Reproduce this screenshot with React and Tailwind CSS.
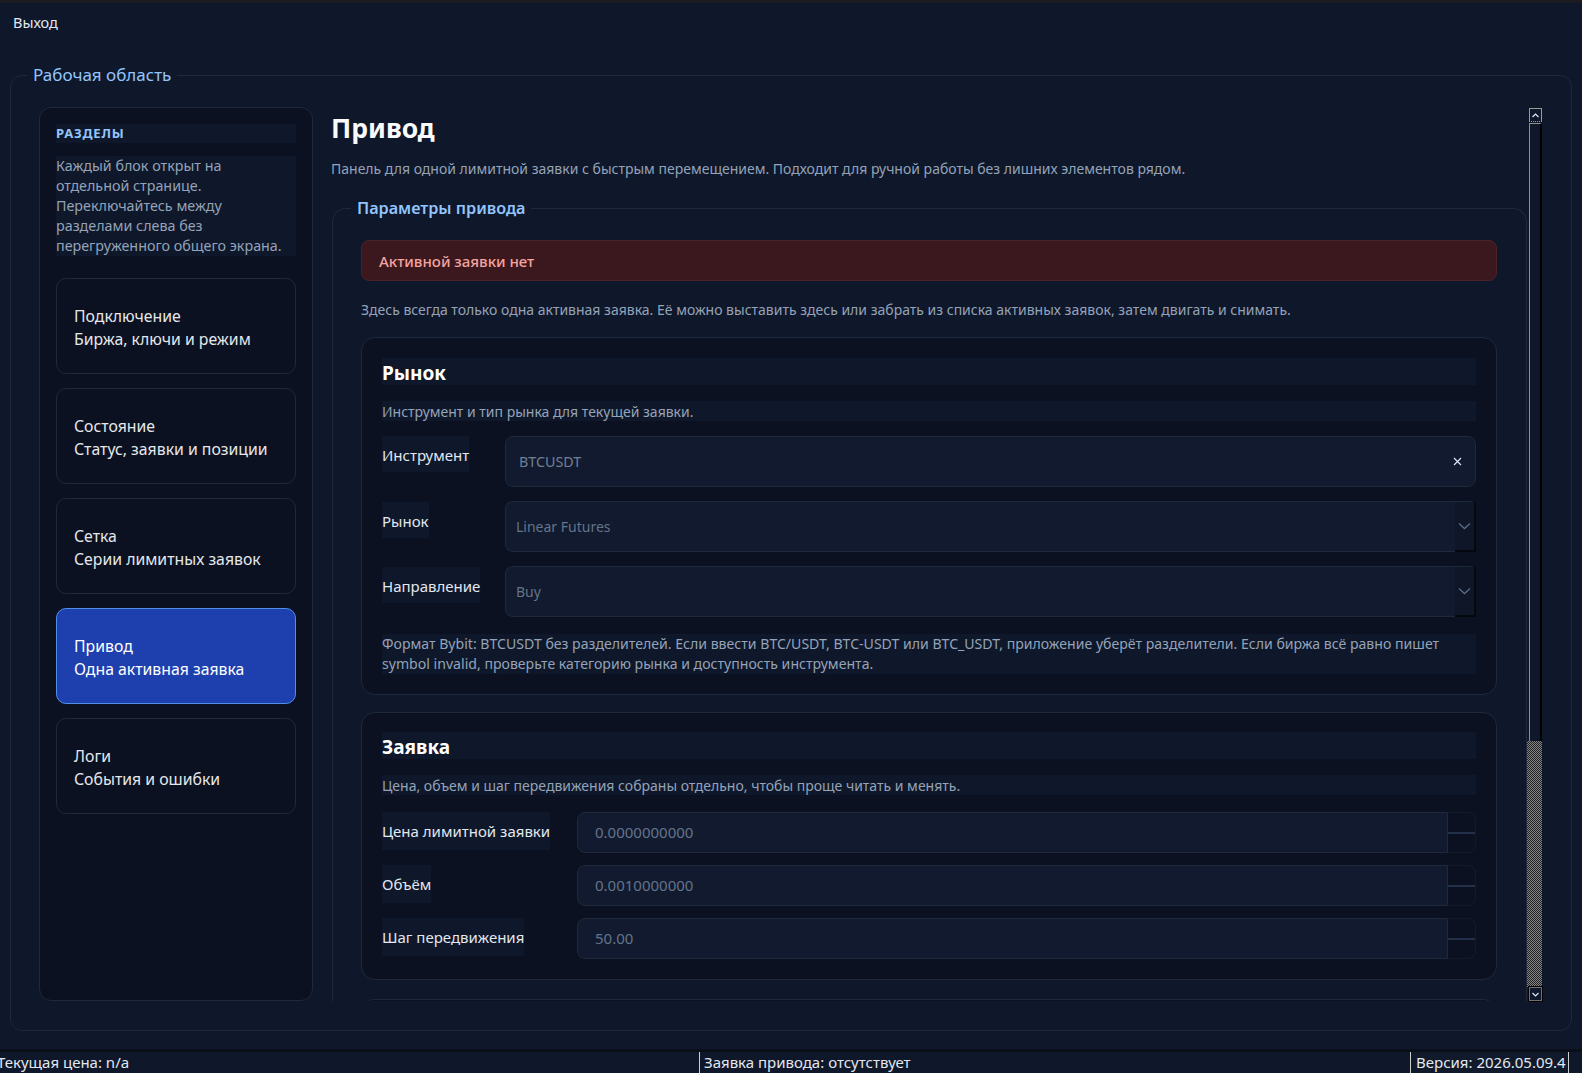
import React from "react";

const navItems = [
  { title: "Подключение", sub: "Биржа, ключи и режим" },
  { title: "Состояние", sub: "Статус, заявки и позиции" },
  { title: "Сетка", sub: "Серии лимитных заявок" },
  { title: "Привод", sub: "Одна активная заявка", active: true },
  { title: "Логи", sub: "События и ошибки" },
];

function Chevron() {
  return (
    <svg width="13" height="8" viewBox="0 0 13 8" fill="none">
      <path d="M1 1.5L6.5 6.5L12 1.5" stroke="#5b6b84" strokeWidth="1.3" />
    </svg>
  );
}

function Label({ children }) {
  return (
    <div className="inline-flex h-[36px] items-center pt-[3px] bg-[#0f172a] text-[15px] text-[#e2e8f0] whitespace-nowrap">
      {children}
    </div>
  );
}

function SelectBox({ value }) {
  return (
    <div className="flex-1 h-[51px] flex rounded-l-[8px] rounded-tr-[6px] border-y border-l border-[#1e293b] bg-[#111a2e]">
      <div className="flex-1 flex items-center pl-[10px] text-[14px] text-[#64748b]">{value}</div>
      <div className="w-[21px] -mb-[1px] flex items-center justify-center bg-[#0e1628] border-r-2 border-b-2 border-r-[#05080f] border-b-[#05080f]">
        <Chevron />
      </div>
    </div>
  );
}

function NumberBox({ value }) {
  return (
    <div className="flex-1 h-[41px] flex">
      <div className="flex-1 flex items-center pl-[17px] bg-[#111a2e] border border-[#1e293b] rounded-l-[8px] text-[15px] text-[#64748b]">
        {value}
      </div>
      <div className="w-[28px] flex items-center border-y border-r border-[#121b2c] rounded-r-[8px]">
        <div className="w-full h-[2px] bg-[#22304a]" />
      </div>
    </div>
  );
}

function SectionCard({ title, desc, children, className = "" }) {
  return (
    <div className={"rounded-[14px] border border-[#1e293b] bg-[#0b1120] px-[20px] " + className}>
      <div className="bg-[#0f172a] h-[27px] pt-[3px] flex items-center text-[19px] font-bold text-white">{title}</div>
      <div className="mt-[16px] bg-[#0f172a] h-[20px] flex items-center text-[14px] text-[#94a3b8]">{desc}</div>
      {children}
    </div>
  );
}

function ScrollBar() {
  return (
    <div className="w-[13px] mt-[1px] flex flex-col">
      <div className="h-[13px] border-t border-x border-[#9a9a9a] flex items-center justify-center">
        <svg width="7" height="5" viewBox="0 0 7 5" fill="none">
          <path d="M0.5 4L3.5 1L6.5 4" stroke="#dbeafe" strokeWidth="1.2" />
        </svg>
      </div>
      <div className="h-[1px] border-t border-dotted border-[#9a9a9a]" />
      <div className="h-[618px] mt-[1px] border-t border-l border-[#8f8f8f] border-r-2 border-r-black bg-[#0f172a]" />
      <div className="flex-1 -ml-[2px] w-[15px] bg-[repeating-conic-gradient(#858585_0_25%,#222222_0_50%)] bg-[length:2px_2px]" />
      <div className="h-[14px] border border-[#6f6f6f] outline outline-1 outline-black bg-[#0f172a] flex items-center justify-center">
        <svg width="7" height="5" viewBox="0 0 7 5" fill="none">
          <path d="M0.5 1L3.5 4L6.5 1" stroke="#dbeafe" strokeWidth="1.2" />
        </svg>
      </div>
    </div>
  );
}

export default function App() {
  return (
    <div className="w-[1582px] h-[1073px] bg-[#0f172a] flex flex-col overflow-hidden font-['Noto_Sans',sans-serif] text-[#e2e8f0]">
      <div className="h-[3px] bg-[#1c1b22]" />
      <div className="h-[40px] px-[13px] flex items-center text-[14.5px] text-[#e2e8f0]">Выход</div>

      {/* Workspace group box */}
      <div className="relative mx-[10px] mt-[32px] h-[956px] border border-[#1e293b] rounded-[12px]">
        <span className="absolute left-[16px] -top-[13px] px-[6px] bg-[#0f172a] text-[17px] leading-[24px] text-[#93c5fd]">
          Рабочая область
        </span>
        <div className="flex h-full pt-[31px] pb-[29px] pl-[28px] pr-[29px]">
          {/* Sidebar */}
          <aside className="w-[274px] shrink-0 rounded-[12px] border border-[#1e293b] bg-[#0b1120] px-[16px] pt-[16px]">
            <div className="h-[19px] bg-[#0f172a] flex items-center text-[13px] font-bold tracking-[0.06em] text-[#93c5fd]">
              РАЗДЕЛЫ
            </div>
            <div className="mt-[13px] bg-[#0f172a] text-[14.3px] leading-[20px] text-[#94a3b8]">
              Каждый блок открыт на
              <br />
              отдельной странице.
              <br />
              Переключайтесь между
              <br />
              разделами слева без
              <br />
              перегруженного общего экрана.
            </div>
            <nav className="mt-[22px] flex flex-col gap-[14px]">
              {navItems.map((it) => (
                <div
                  key={it.title}
                  className={
                    "h-[96px] rounded-[10px] border px-[17px] pt-[4px] flex flex-col justify-center text-[15.8px] leading-[23px] " +
                    (it.active
                      ? "bg-[#1e40af] border-[#4f8fe8] text-white"
                      : "bg-[#0b1120] border-[#1e293b] text-[#e5e7eb]")
                  }
                >
                  <span>{it.title}</span>
                  <span>{it.sub}</span>
                </div>
              ))}
            </nav>
          </aside>

          {/* Page content */}
          <main className="flex-1 ml-[18px] flex gap-[2px] min-w-0">
            <div className="flex-1 min-w-0 overflow-hidden pt-[5px]">
              <h1 className="text-[26.5px] leading-[32px] font-bold text-[#f8fafc]">Привод</h1>
              <p className="mt-[15px] text-[14px] leading-[20px] text-[#94a3b8]">
                Панель для одной лимитной заявки с быстрым перемещением. Подходит для ручной работы без лишних элементов рядом.
              </p>

              <div className="relative mt-[29px] ml-[1px] rounded-t-[14px] border-t border-x border-[#1e293b] pt-[31px] pl-[28px] pr-[29px]">
                <span className="absolute left-[18px] -top-[13px] px-[6px] bg-[#0f172a] text-[16.2px] leading-[24px] font-semibold text-[#93c5fd]">
                  Параметры привода
                </span>

                <div className="h-[41px] rounded-[8px] border border-[#4a2228] bg-[#3b181d] flex items-center pt-[1px] px-[17px] text-[15px] font-medium text-[#f5a3a0]">
                  Активной заявки нет
                </div>

                <p className="mt-[19px] text-[14px] leading-[20px] text-[#94a3b8]">
                  Здесь всегда только одна активная заявка. Её можно выставить здесь или забрать из списка активных заявок, затем двигать и снимать.
                </p>

                <SectionCard
                  className="mt-[17px] pt-[20px] pb-[20px]"
                  title="Рынок"
                  desc="Инструмент и тип рынка для текущей заявки."
                >
                  <div className="mt-[15px] flex flex-col gap-[14px]">
                    <div className="flex h-[51px]">
                      <div className="w-[123px] shrink-0">
                        <Label>Инструмент</Label>
                      </div>
                      <div className="flex-1 h-[51px] flex items-center rounded-[8px] border border-[#1e293b] bg-[#111a2e] pl-[13px] pr-[13px] text-[14.3px] text-[#718096]">
                        <span className="flex-1">BTCUSDT</span>
                        <svg width="9" height="9" viewBox="0 0 9 9" fill="none">
                          <path d="M1 1L8 8M8 1L1 8" stroke="#dbeafe" strokeWidth="1.1" />
                        </svg>
                      </div>
                    </div>
                    <div className="flex h-[51px]">
                      <div className="w-[123px] shrink-0 pt-[1px]">
                        <Label>Рынок</Label>
                      </div>
                      <SelectBox value="Linear Futures" />
                    </div>
                    <div className="flex h-[51px]">
                      <div className="w-[123px] shrink-0 pt-[1px]">
                        <Label>Направление</Label>
                      </div>
                      <SelectBox value="Buy" />
                    </div>
                  </div>
                  <div className="mt-[17px] bg-[#0f172a] text-[14.1px] leading-[20px] text-[#94a3b8]">
                    Формат Bybit: BTCUSDT без разделителей. Если ввести BTC/USDT, BTC-USDT или BTC_USDT, приложение уберёт разделители. Если биржа всё равно пишет symbol invalid, проверьте категорию рынка и доступность инструмента.
                  </div>
                </SectionCard>

                <SectionCard
                  className="mt-[17px] pt-[19px] pb-[20px]"
                  title="Заявка"
                  desc="Цена, объем и шаг передвижения собраны отдельно, чтобы проще читать и менять."
                >
                  <div className="mt-[17px] flex flex-col gap-[12px]">
                    {[
                      ["Цена лимитной заявки", "0.0000000000"],
                      ["Объём", "0.0010000000"],
                      ["Шаг передвижения", "50.00"],
                    ].map(([label, value]) => (
                      <div key={label} className="flex h-[41px]">
                        <div className="w-[195px] shrink-0">
                          <div className="inline-flex h-[38px] items-center pt-[1px] bg-[#0f172a] text-[15px] text-[#e2e8f0] whitespace-nowrap">
                            {label}
                          </div>
                        </div>
                        <NumberBox value={value} />
                      </div>
                    ))}
                  </div>
                </SectionCard>

                <div className="mt-[19px] h-[40px] rounded-t-[14px] border-t border-x border-[#1e293b] bg-[#0b1120]" />
              </div>
            </div>
            <ScrollBar />
          </main>
        </div>
      </div>

      {/* Status bar */}
      <div className="h-[18px]" />
      <div className="h-[3px] bg-[#0a0f1a]" />
      <div className="h-[21px] flex text-[15px] leading-[21px] text-[#e2e8f0]">
        <div className="w-[702px] -ml-[3px] whitespace-nowrap overflow-hidden">Текущая цена: n/a</div>
        <div className="w-[1px] bg-[#cfcfcf]" />
        <div className="w-[710px] pl-[4px] whitespace-nowrap">Заявка привода: отсутствует</div>
        <div className="w-[1px] bg-[#cfcfcf]" />
        <div className="w-[157px] pl-[5px] whitespace-nowrap overflow-hidden bg-[#111a2b]">Версия: 2026.05.09.4</div>
        <div className="w-[1px] bg-[#cfcfcf]" />
        <div className="flex-1" />
      </div>
    </div>
  );
}
